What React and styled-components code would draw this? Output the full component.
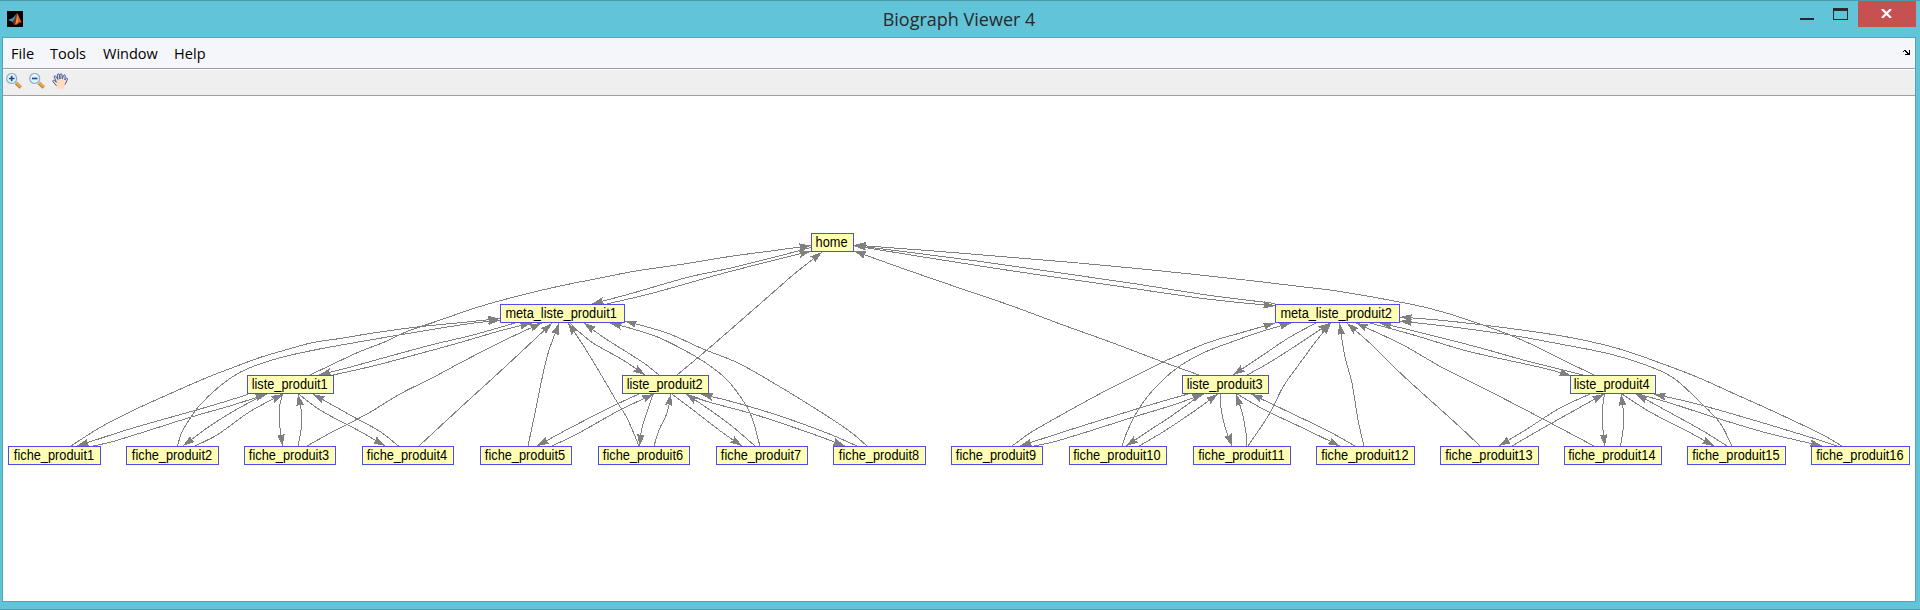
import React from 'react';
import styled, { createGlobalStyle } from 'styled-components';

const GlobalStyle = createGlobalStyle`
  * { box-sizing: border-box; }
  body { margin: 0; background: #61c4d8; overflow: hidden; }
`;

const ui = '"Open Sans", "Noto Sans", sans-serif';

const Window = styled.div`
  display: flex;
  flex-direction: column;
  width: 1920px;
  height: 610px;
  background: #61c4d8;
  border-top: 1px solid #4b9aaa;
  border-bottom: 1px solid #4b9aaa;
  padding: 0 4px 7px 2px;
`;

const TitleBar = styled.header`
  display: grid;
  grid-template-columns: 1fr auto 1fr;
  height: 36px;
  flex: none;
`;

const AppIcon = styled.svg`
  display: block;
  margin: 10px 0 0 5px;
`;

const Title = styled.h1`
  margin: 0;
  padding-top: 4px;
  font: 400 18px/28px ${ui};
  color: #262b2d;
  white-space: nowrap;
`;

const Controls = styled.div`
  display: flex;
  justify-content: flex-end;
  align-items: flex-start;
`;

const Minimize = styled.span`
  width: 14px;
  height: 2px;
  margin: 17px 19px 0 0;
  background: #2a2a2a;
`;

const Maximize = styled.span`
  width: 15px;
  height: 12px;
  margin: 7px 10px 0 0;
  border: 1px solid #2a2a2a;
  border-top-width: 3px;
`;

const Close = styled.span`
  display: flex;
  justify-content: center;
  width: 58px;
  height: 26px;
  padding: 8px 2px 0 0;
  background: #c75050;
`;

const Client = styled.main`
  display: flex;
  flex-direction: column;
  flex: 1;
  min-height: 0;
  border: 1px solid #4fa6b7;
  background: #fff;
`;

const MenuBar = styled.nav`
  display: flex;
  justify-content: space-between;
  height: 31px;
  flex: none;
  padding: 0 5px 0 8px;
  background: #f5f6f9;
  border-bottom: 1px solid #a0a0a0;
`;

const MenuList = styled.div`
  display: flex;
`;

const MenuItem = styled.span`
  width: ${(p) => p.$width}px;
  font: 400 14.5px/31px ${ui};
  letter-spacing: ${(p) => p.$spacing}px;
  color: #000;
  white-space: nowrap;
`;

const DockArrow = styled.svg`
  display: block;
  margin-top: 12px;
`;

const ToolBar = styled.div`
  display: flex;
  gap: 7px;
  height: 27px;
  flex: none;
  padding: 3px 3px 0;
  background: #efefef;
  border-top: 1px solid #fff;
  border-bottom: 1px solid #a0a0a0;
`;

const ToolIcon = styled.svg`
  display: block;
  width: 16px;
  height: 16px;
`;

const Canvas = styled.section`
  position: relative;
  flex: 1;
  min-height: 0;
`;

const EdgeLayer = styled.svg`
  position: absolute;
  left: 0;
  top: 0;
  display: block;
`;

const Node = styled.div`
  position: absolute;
  left: ${(p) => p.$x - 3}px;
  top: ${(p) => p.$y - 96}px;
  width: ${(p) => p.$w}px;
  height: 19px;
  display: flex;
  justify-content: center;
  padding-right: 2px;
  border: 1px solid #4d4dee;
  background: #ffffb3;
`;

const NodeLabel = styled.span`
  font: 14px/16px "Liberation Sans", Arial, sans-serif;
  color: #000;
  white-space: nowrap;
  transform: scaleX(0.912);
`;

const nodes = [
  ['home', 811, 233, 43],
  ['meta_liste_produit1', 500, 304, 125],
  ['meta_liste_produit2', 1275, 304, 125],
  ['liste_produit1', 247, 375, 87],
  ['liste_produit2', 622, 375, 87],
  ['liste_produit3', 1182, 375, 87],
  ['liste_produit4', 1570, 375, 86],
  ['fiche_produit1', 8, 446, 93],
  ['fiche_produit2', 126, 446, 93],
  ['fiche_produit3', 244, 446, 92],
  ['fiche_produit4', 362, 446, 92],
  ['fiche_produit5', 480, 446, 92],
  ['fiche_produit6', 598, 446, 92],
  ['fiche_produit7', 716, 446, 92],
  ['fiche_produit8', 833, 446, 93],
  ['fiche_produit9', 951, 446, 92],
  ['fiche_produit10', 1069, 446, 98],
  ['fiche_produit11', 1193, 446, 98],
  ['fiche_produit12', 1316, 446, 99],
  ['fiche_produit13', 1440, 446, 99],
  ['fiche_produit14', 1564, 446, 98],
  ['fiche_produit15', 1687, 446, 99],
  ['fiche_produit16', 1811, 446, 99],
];

// Control points of every edge, in window coordinates; the arrow sits on the last point.
const edges = [
  // home and the two meta lists
  '811,247.5 783,255 733,267.5 687,277.5 633,293 592,304',
  '607,304 653,293 717,275 767,262 811,251',
  '855,246 865,247.5 920,256.5 1013,271 1120,286.5 1207,299 1275,306',
  '1275,303.5 1207,295 1130,283 1040,270 973,260.5 907,252 854,245.5',
  // lists to home
  '310,375 333,364 360,351.5 387,341 407,331.5 433,322.5 480,306.5 520,295.5 560,286 600,278 633,271.5 687,263.5 733,256 767,251.5 811,245.5',
  '677,375 707,350 777,289 793,275 822,252',
  '1199,375 1163,362 1113,343 1063,325 1012,306 965,290 907,270 854,251',
  '1594,375 1567,362 1537,347 1510,335 1477,323 1443,312 1410,304 1337,291 1300,286.5 1250,280.5 1157,270.5 1073,262.5 1013,257.5 940,251.5 854,245',
  // meta_liste_produit1 and its lists
  '515,323 473,335 433,344.5 383,358 347,368 319,375',
  '333,375 373,366 433,350 460,342.5 503,330 531.5,323',
  '570,323 577,330 593,343 623,360 645,375',
  '659,375 643,362.5 603,337 584,323',
  // pages to meta_liste_produit1
  '71,446 100,427.5 133,410.5 167,395 207,377.5 233,367.5 260,357.5 287,349.5 313,342.5 340,338.5 373,333 417,327 467,322 500,318.5',
  '177.5,446 181.5,433 190,418.5 200,405 217,388.5 237,374 257,365 283,357 317,349.5 367,340.5 417,332 467,324 500,320',
  '307,446 333,431.5 367,414 400,394 433,377.5 460,363 503,341 541.5,323',
  '419,446 460,408 493,378 520,353 552,323',
  '528,446 535,413 547,357 559,323',
  '639,446 627,418 617,402 603,378 583,345 568,323',
  '760,446 750,413 730,383 713,368 693,355 660,338 633,329 610,323',
  '867,446 850,431.5 820,411.5 777,385 737,362.5 703,349 667,333 625,321',
  // liste_produit1
  '248,394.5 207,407 133,428 77,446',
  '93,446 113,441.5 193,416.5 233,405 267,394',
  '265,394 233,411.5 207,428 183,446',
  '195,446 217,435 250,411.5 283,394',
  '282.5,394 279.5,407 279.5,423 282.5,446',
  '298,446 301,430 301.5,413 298,394',
  '298.5,394 320,410 363,433 385,446',
  '398.5,446 380,431.5 350,415 313,394',
  // liste_produit2
  '639,394 613,406 570,428 537,446',
  '552,446 577,434 620,410 654,394',
  '653,394 647,412 641.5,430 639.5,446',
  '654,446 659,430 667,413 671,394',
  '672,394 697,413 723,433 742,446',
  '755,446 733,427 710,410 686,394',
  '686,394 707,401.5 753,414 810,433 845,446',
  '857,446 827,433 780,416 737,403 701,394',
  // meta_liste_produit2 and its lists
  '1316,323 1290,337 1263,355 1233,375',
  '1247,375 1267,364 1297,345 1330,323',
  '1370,323 1417,336 1467,351 1543,368 1571,375.5',
  '1583,375 1527,361 1477,347 1410,330 1380,323',
  // pages to meta_liste_produit2
  '1012,446 1030,433 1063,414 1107,390 1137,375 1163,362 1207,343 1240,333 1275,323',
  '1122,446 1127,432 1138,410 1153,390 1177,368 1203,353 1237,340 1263,331 1291,323',
  '1248,446 1270,413 1283,387 1300,363 1317,340 1331,323',
  '1364,446 1358,420 1352,383 1345,357 1339.5,323',
  '1480,446 1460,427 1410,382 1393,366 1373,346 1347,323',
  '1594,446 1543,419 1493,393 1443,368 1403,345 1356,323',
  '1732,446 1720,423 1700,402 1672,377 1643,364 1610,354 1560,344 1510,335 1453,327 1400,321',
  '1842,446 1823,435 1777,413 1737,395 1697,377 1663,364 1623,350 1583,340 1543,333 1483,325 1443,320.5 1400,317',
  // liste_produit3
  '1188,394 1143,407 1063,432 1020,446',
  '1034,446 1057,441 1137,416 1173,405 1204,394',
  '1202,394 1170,417 1150,430 1126,446',
  '1139,446 1163,432 1193,412 1218,394',
  '1220,394 1221,408 1225,427 1232,446',
  '1247,446 1246,433 1242,412 1236,394',
  '1237,394 1263,409 1307,430 1340,446',
  '1355,446 1330,432 1293,414 1251,394',
  // liste_produit4
  '1590,394 1560,408 1527,429 1499,446',
  '1512,446 1543,428 1577,409 1604,394',
  '1604.5,394 1602.5,410 1603,430 1605,446',
  '1620.5,446 1623,430 1623.5,413 1621,394',
  '1622,394 1650,412 1687,431 1714,446',
  '1727,446 1703,431 1667,411 1636,394',
  '1638,394 1670,403 1710,416 1767,433 1822,446',
  '1837,446 1803,435 1743,417 1693,403 1654,394',
].map((s) => s.split(' ').map((p) => p.split(',').map(Number)));

function curve(points) {
  let d = `M${points[0].join(' ')}`;
  for (let i = 0; i < points.length - 1; i += 1) {
    const p0 = points[i - 1] || points[i];
    const p1 = points[i];
    const p2 = points[i + 1];
    const p3 = points[i + 2] || p2;
    const len = Math.hypot(p2[0] - p1[0], p2[1] - p1[1]) / 3;
    const a = Math.hypot(p2[0] - p0[0], p2[1] - p0[1]);
    const b = Math.hypot(p3[0] - p1[0], p3[1] - p1[1]);
    const c1 = [p1[0] + ((p2[0] - p0[0]) / a) * len, p1[1] + ((p2[1] - p0[1]) / a) * len];
    const c2 = [p2[0] - ((p3[0] - p1[0]) / b) * len, p2[1] - ((p3[1] - p1[1]) / b) * len];
    d += `C${[...c1, ...c2, ...p2].map((n) => n.toFixed(2)).join(' ')}`;
  }
  return d;
}

function Edge({ points }) {
  const [x, y] = points[points.length - 1];
  const [px, py] = points[points.length - 2];
  const angle = (Math.atan2(y - py, x - px) * 180) / Math.PI;
  return (
    <g>
      <path d={curve(points)} fill="none" stroke="#808080" />
      <path
        d="M0 0L-12 -3.9L-10.5 0L-12 3.9Z"
        fill="#808080"
        transform={`translate(${x} ${y}) rotate(${angle.toFixed(1)})`}
      />
    </g>
  );
}

function MatlabIcon() {
  return (
    <AppIcon width="16" height="16" viewBox="0 0 16 16">
      <path fill="#000" d="M0 0h16v16H0z" />
      <path fill="#3e8fae" d="M1 9l4-1.8 2-1.5L9.5 3 8 8.5 5.5 11 3.5 10z" />
      <path fill="#7a2b17" d="M9.8 2L8.5 6 6.2 10l-.7 1.5 1.8 2.3 1.7-2z" />
      <path fill="#e2622a" d="M9.8 2c1.6 1.2 2.7 6 5.2 9.6-1.6-.8-2.8-.3-3.8.8-.9 1-2 1.7-3.9 1.4C9.2 11.5 9.6 7 9.8 2z" />
      <path fill="#f4b04a" d="M10 3.2c.5 2 .8 5 .5 7.3l-1.7 2.2C9.7 9.5 9.8 6.5 10 3.2z" />
    </AppIcon>
  );
}

function ZoomIcon({ plus }) {
  return (
    <ToolIcon viewBox="0 0 16 16">
      <path d="M10 10l4.8 4.6" stroke="#a97a45" strokeWidth="3.4" />
      <path d="M10.2 9.8l4.9 4.5" stroke="#f5a93c" strokeWidth="2" />
      <circle cx="5.7" cy="5.5" r="5" fill="#d9f3fa" stroke="#8fb0cc" strokeWidth="1.2" />
      <path d="M2.4 4.2a3.8 3.8 0 0 1 6.2-1" fill="none" stroke="#fff" />
      <path d={plus ? 'M3 5.5h5.5M5.7 2.8v5.5' : 'M3 5.5h5.5'} stroke="#20489a" strokeWidth="1.6" />
    </ToolIcon>
  );
}

function HandIcon() {
  return (
    <ToolIcon viewBox="0 0 16 16">
      <path
        d="M5.3 15.8L4.6 13 .8 8.4c-.5-1 .8-1.5 1.6-.8l2 1.6L2.2 4c-.3-1.3 1.2-1.7 1.8-.5L6 6.5 5.3 2C5.3.6 7 .4 7.3 1.7L8 6V1.6C8.2.3 9.9.4 10 1.7L10.3 6l1.2-3.5c.5-1.1 2-.7 1.8.5L12.8 7l1.3-1.6c.8-.9 1.9-.1 1.4.9L13 11.7l-.8 4.1z"
        fill="#fddcc0"
      />
      <path
        d="M4.6 13L.8 8.4c-.5-1 .8-1.5 1.6-.8l2 1.6L2.2 4c-.3-1.3 1.2-1.7 1.8-.5L6 6.5 5.3 2C5.3.6 7 .4 7.3 1.7L8 6V1.6C8.2.3 9.9.4 10 1.7L10.3 6l1.2-3.5c.5-1.1 2-.7 1.8.5L12.8 7l1.3-1.6c.8-.9 1.9-.1 1.4.9L13 11.7"
        fill="none"
        stroke="#3f5fae"
        strokeWidth="1"
      />
    </ToolIcon>
  );
}

const menus = [
  ['File', 39, 0.1],
  ['Tools', 53, 0],
  ['Window', 71, 0],
  ['Help', 40, 0.05],
];

export default function App() {
  return (
    <>
      <GlobalStyle />
      <Window>
        <TitleBar>
          <MatlabIcon />
          <Title>Biograph Viewer 4</Title>
          <Controls>
            <Minimize />
            <Maximize />
            <Close>
              <svg width="11" height="9" viewBox="0 0 11 9">
                <path d="M1 0L10 9M10 0L1 9" stroke="#fff" strokeWidth="2.2" />
              </svg>
            </Close>
          </Controls>
        </TitleBar>
        <Client>
          <MenuBar>
            <MenuList>
              {menus.map(([label, width, spacing]) => (
                <MenuItem key={label} $width={width} $spacing={spacing}>{label}</MenuItem>
              ))}
            </MenuList>
            <DockArrow width="7" height="5" viewBox="0 0 7 5" shapeRendering="crispEdges">
              <path d="M1 0h2v1h1v1h1v1h1V0h1v5H2V4h2V3H3V2H2V1H1zM0 1h1v1H0z" fill="#000" />
            </DockArrow>
          </MenuBar>
          <ToolBar>
            <ZoomIcon plus />
            <ZoomIcon />
            <HandIcon />
          </ToolBar>
          <Canvas>
            <EdgeLayer width="1912" height="505" viewBox="3 96 1912 505" shapeRendering="crispEdges">
              {edges.map((points, i) => (
                <Edge key={i} points={points} />
              ))}
            </EdgeLayer>
            {nodes.map(([name, x, y, w]) => (
              <Node key={name} $x={x} $y={y} $w={w}>
                <NodeLabel>{name}</NodeLabel>
              </Node>
            ))}
          </Canvas>
        </Client>
      </Window>
    </>
  );
}
